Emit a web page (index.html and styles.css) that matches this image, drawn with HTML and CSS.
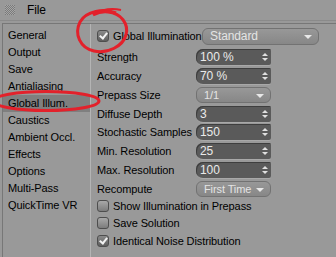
FILE: index.html
```html
<!DOCTYPE html>
<html lang="en">
<head>
    <meta charset="UTF-8">
    <title>Render Settings</title>
    <link rel="stylesheet" href="styles.css">
</head>
<body>
    <div class="topbar">
        <span class="grip"></span>
        <span class="menu">File</span>
    </div>
    <div class="main">
        <ul class="nav">
            <li>General</li>
            <li>Output</li>
            <li>Save</li>
            <li>Antialiasing</li>
            <li class="active">Global Illum.</li>
            <li>Caustics</li>
            <li>Ambient Occl.</li>
            <li>Effects</li>
            <li>Options</li>
            <li>Multi-Pass</li>
            <li>QuickTime VR</li>
        </ul>
        <div class="panel">
            <div class="head">
                <label class="check"><span class="box on"></span>Global Illumination</label>
                <div class="drop wide">Standard<span class="arrow"></span></div>
            </div>
            <div class="rows">
                <span>Strength</span><div class="num">100 %<span class="spin"></span></div>
                <span>Accuracy</span><div class="num">70 %<span class="spin"></span></div>
                <span>Prepass Size</span><div class="drop">1/1<span class="arrow"></span></div>
                <span>Diffuse Depth</span><div class="num">3<span class="spin"></span></div>
                <span>Stochastic Samples</span><div class="num">150<span class="spin"></span></div>
                <span>Min. Resolution</span><div class="num">25<span class="spin"></span></div>
                <span>Max. Resolution</span><div class="num">100<span class="spin"></span></div>
                <span>Recompute</span><div class="drop">First Time<span class="arrow"></span></div>
            </div>
            <div class="checks">
                <label class="check"><span class="box"></span>Show Illumination in Prepass</label>
                <label class="check"><span class="box"></span>Save Solution</label>
                <label class="check"><span class="box on"></span>Identical Noise Distribution</label>
            </div>
        </div>
    </div>

    <!-- red annotation marks drawn over the screenshot -->
    <svg class="marks" width="336" height="257" viewBox="0 0 336 257">
        <path d="M116 13 C104 8 86 11 80 22 C74 34 80 48 94 51 C108 54 123 46 126 35 C129 24 121 13 108 12 C102 11 97 13 93 15" fill="none" stroke="#e3212b" stroke-width="3"/>
        <path d="M95 14 C103 9 112 8 121 10" fill="none" stroke="#e3212b" stroke-width="2"/>
        <ellipse cx="46" cy="101" rx="53" ry="9.5" fill="none" stroke="#e3212b" stroke-width="3"/>
    </svg>
</body>
</html>
```

FILE: styles.css
```css
body {
    margin: 0;
    width: 336px;
    height: 257px;
    overflow: hidden;
    background: #999;
    font-family: "Liberation Sans", Arial, sans-serif;
    font-size: 11px;
    letter-spacing: -0.1px;
    color: #000;
    position: relative;
}
.topbar {
    height: 20px;
    display: flex;
    align-items: center;
    gap: 12px;
    padding-left: 5px;
    border-bottom: 1px solid #8a8a8a;
}
.grip {
    width: 10px;
    height: 10px;
    background: repeating-conic-gradient(#7a7a7a 0 25%, #a6a6a6 0 50%) 0 0 / 2px 2px;
}
.menu { font-size: 12px; }
.main {
    display: flex;
    margin: 2px 0 0 2px;
    border-top: 1px solid #777;
    border-left: 1px solid #777;
    height: 234px;
}
.nav {
    list-style: none;
    margin: 0;
    padding: 3px 0 0;
    width: 87px;
    border-right: 1px solid #b4b4b4;
}
.nav li {
    height: 17px;
    line-height: 17px;
    padding-left: 5px;
}
.nav li.active { background: #7f7f7f; }
.panel {
    flex: 1;
    padding: 2px 0 0 6px;
}
.head {
    display: flex;
    align-items: center;
    height: 18px;
    margin-top: 1px;
}
.check {
    display: flex;
    align-items: center;
    gap: 4px;
    white-space: nowrap;
}
.head .check { width: 105px; }
.box {
    width: 10px;
    height: 10px;
    border: 1px solid #4e4e4e;
    border-radius: 3px;
    background: linear-gradient(#a8a8a8, #7c7c7c);
    position: relative;
}
.box.on { background: linear-gradient(#8a8a8a, #5e5e5e); }
.box.on::after {
    content: "";
    position: absolute;
    left: 3px;
    top: 0;
    width: 3px;
    height: 6px;
    border: solid #f2f2f2;
    border-width: 0 2px 2px 0;
    transform: rotate(38deg);
}
.drop {
    height: 15px;
    border: 1px solid #727272;
    border-radius: 6px;
    background: linear-gradient(#989898, #878787);
    color: #e4e4e4;
    font-size: 12px;
    line-height: 15px;
    padding-left: 7px;
    position: relative;
    box-sizing: content-box;
}
.drop.wide { width: 108px; }
.arrow {
    position: absolute;
    right: 6px;
    top: 6px;
    border: 4px solid transparent;
    border-top: 4px solid #e8e8e8;
    border-bottom: 0;
}
.rows {
    display: grid;
    grid-template-columns: 99px 75px;
    grid-auto-rows: 18.75px;
    align-items: center;
    margin-top: 3px;
}
.rows .drop {
    height: 14px;
    line-height: 14px;
    width: 66px;
    font-size: 11px;
}
.num {
    height: 16px;
    line-height: 16px;
    background: #5a5a5a;
    border-radius: 7px 2px 2px 7px;
    box-shadow: inset 1px 1px 0 #3e3e3e, 0 1px 0 #a8a8a8;
    color: #eaeaea;
    font-size: 12px;
    padding-left: 4px;
    position: relative;
}
.spin {
    position: absolute;
    right: 3px;
    top: 4px;
    width: 0;
    height: 0;
    border: 3px solid transparent;
    border-bottom: 3px solid #e0e0e0;
    border-top: 0;
}
.spin::after {
    content: "";
    position: absolute;
    left: -3px;
    top: 5px;
    border: 3px solid transparent;
    border-top: 3px solid #e0e0e0;
    border-bottom: 0;
}
.checks {
    display: flex;
    flex-direction: column;
    margin-top: -1px;
}
.checks .check { height: 17.6px; }
.marks {
    position: absolute;
    left: 0;
    top: 0;
    pointer-events: none;
}
```
